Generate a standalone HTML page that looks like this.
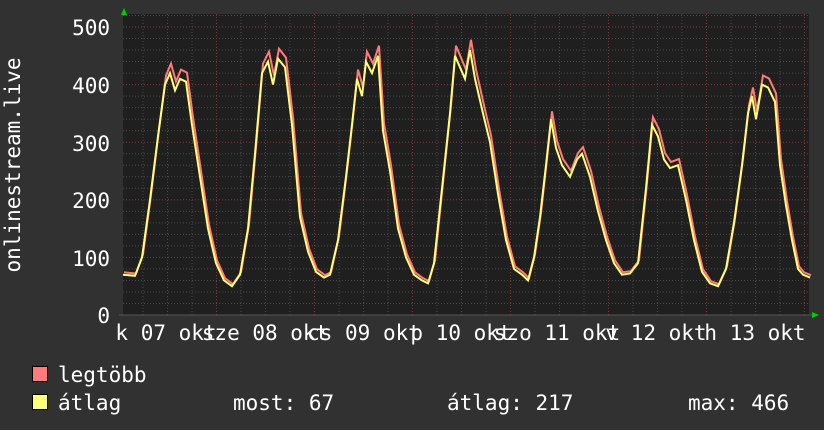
<!DOCTYPE html>
<html><head><style>
body{margin:0;background:#313131;width:824px;height:430px;overflow:hidden}
svg{display:block}
text{font-family:"DejaVu Sans Mono","Liberation Mono",monospace;fill:#fff;font-size:21px}
</style></head><body>
<svg id="s" width="824" height="430" xmlns="http://www.w3.org/2000/svg">
<defs>
<pattern id="hg" x="0" y="0" width="4" height="1" patternUnits="userSpaceOnUse"><rect width="2" height="1" fill="#555"/></pattern>
</defs>
<rect x="123" y="14" width="686" height="301" fill="#1f1f1f"/>
<g id="grid"></g>
<path id="red" fill="none" stroke="#ff7b7b" stroke-width="2"/>
<path id="yel" fill="none" stroke="#ffff77" stroke-width="2"/>
<line x1="119" y1="315" x2="812" y2="315" stroke="#555" stroke-width="1"/>
<polygon points="121,15 127,15 124,8" fill="#0c0"/>
<polygon points="812,312 812,318 819,315" fill="#0c0"/>
<g text-anchor="end">
<text x="110" y="35">500</text><text x="110" y="93">400</text><text x="110" y="151">300</text>
<text x="110" y="208">200</text><text x="110" y="266">100</text><text x="110" y="323">0</text>
</g>
<text transform="translate(20,165) rotate(-90)" text-anchor="middle">onlinestream.live</text>
<g text-anchor="middle">
<text x="166" y="340">k 07 okt</text><text x="265" y="340">sze 08 okt</text><text x="364" y="340">cs 09 okt</text>
<text x="461" y="340">p 10 okt</text><text x="557" y="340">szo 11 okt</text><text x="656" y="340">v 12 okt</text><text x="755" y="340">h 13 okt</text>
</g>
<rect x="32.5" y="366.5" width="15" height="15" fill="#ff7b7b" stroke="#000"/>
<rect x="32.5" y="394.5" width="15" height="15" fill="#ffff77" stroke="#000"/>
<text x="58" y="382">legtöbb</text>
<text x="58" y="410">átlag</text>
<text x="233" y="410">most: 67</text>
<text x="447" y="410">átlag: 217</text>
<text x="688" y="410">max: 466</text>
</svg>
<script>
var g=document.getElementById('grid'),h='';
for(var v=0;v<=520;v+=20){var y=315-v*0.576;if(y<14)break;var maj=v%100==0;
h+='<line x1="123" x2="809" y1="'+y+'" y2="'+y+'" stroke="'+(maj?'#7a3a3a':'#4a4a4a')+'" stroke-dasharray="1,2"/>';}
for(var x=143;x<809;x+=24.5){var d=Math.abs(((x-216)%98+98)%98)<2||Math.abs(((x-216)%98+98)%98-98)<2;
h+='<line y1="14" y2="315" x1="'+x+'" x2="'+x+'" stroke="'+(d?'#7a3a3a':'#4a4a4a')+'" stroke-dasharray="1,2"/>';}
g.innerHTML=h;
var k=[123,70,135,68,142,100,150,200,158,310,165,400,170,420,175,390,180,410,186,405,192,330,200,240,208,150,216,90,224,60,232,50,240,70,248,150,255,280,262,420,268,440,273,400,278,445,285,430,292,330,300,170,308,110,316,75,324,65,330,70,338,130,346,240,352,330,357,410,362,380,366,440,372,420,378,450,383,320,390,250,398,150,406,100,414,70,422,60,428,55,434,90,442,220,450,350,455,450,460,430,465,410,470,460,475,410,483,350,490,300,498,210,506,130,514,80,522,70,528,60,534,100,540,170,546,260,551,340,556,290,562,260,570,240,577,270,582,280,590,240,598,180,606,130,614,90,622,70,630,72,638,90,646,220,652,330,658,310,664,270,670,255,678,260,686,200,694,130,702,75,710,55,718,50,726,80,734,160,742,260,748,350,752,380,756,340,762,400,768,395,775,370,780,260,786,190,792,130,798,80,803,70,810,65];
var r='',yl='';
for(var i=0;i<k.length;i+=2){var x=k[i],v=k[i+1];
yl+=(i?'L':'M')+x+','+(315-v*0.576).toFixed(1);
r+=(i?'L':'M')+(x+1)+','+(315-v*1.035*0.576-1).toFixed(1);}
document.getElementById('red').setAttribute('d',r);
document.getElementById('yel').setAttribute('d',yl);
</script>
</body></html>
